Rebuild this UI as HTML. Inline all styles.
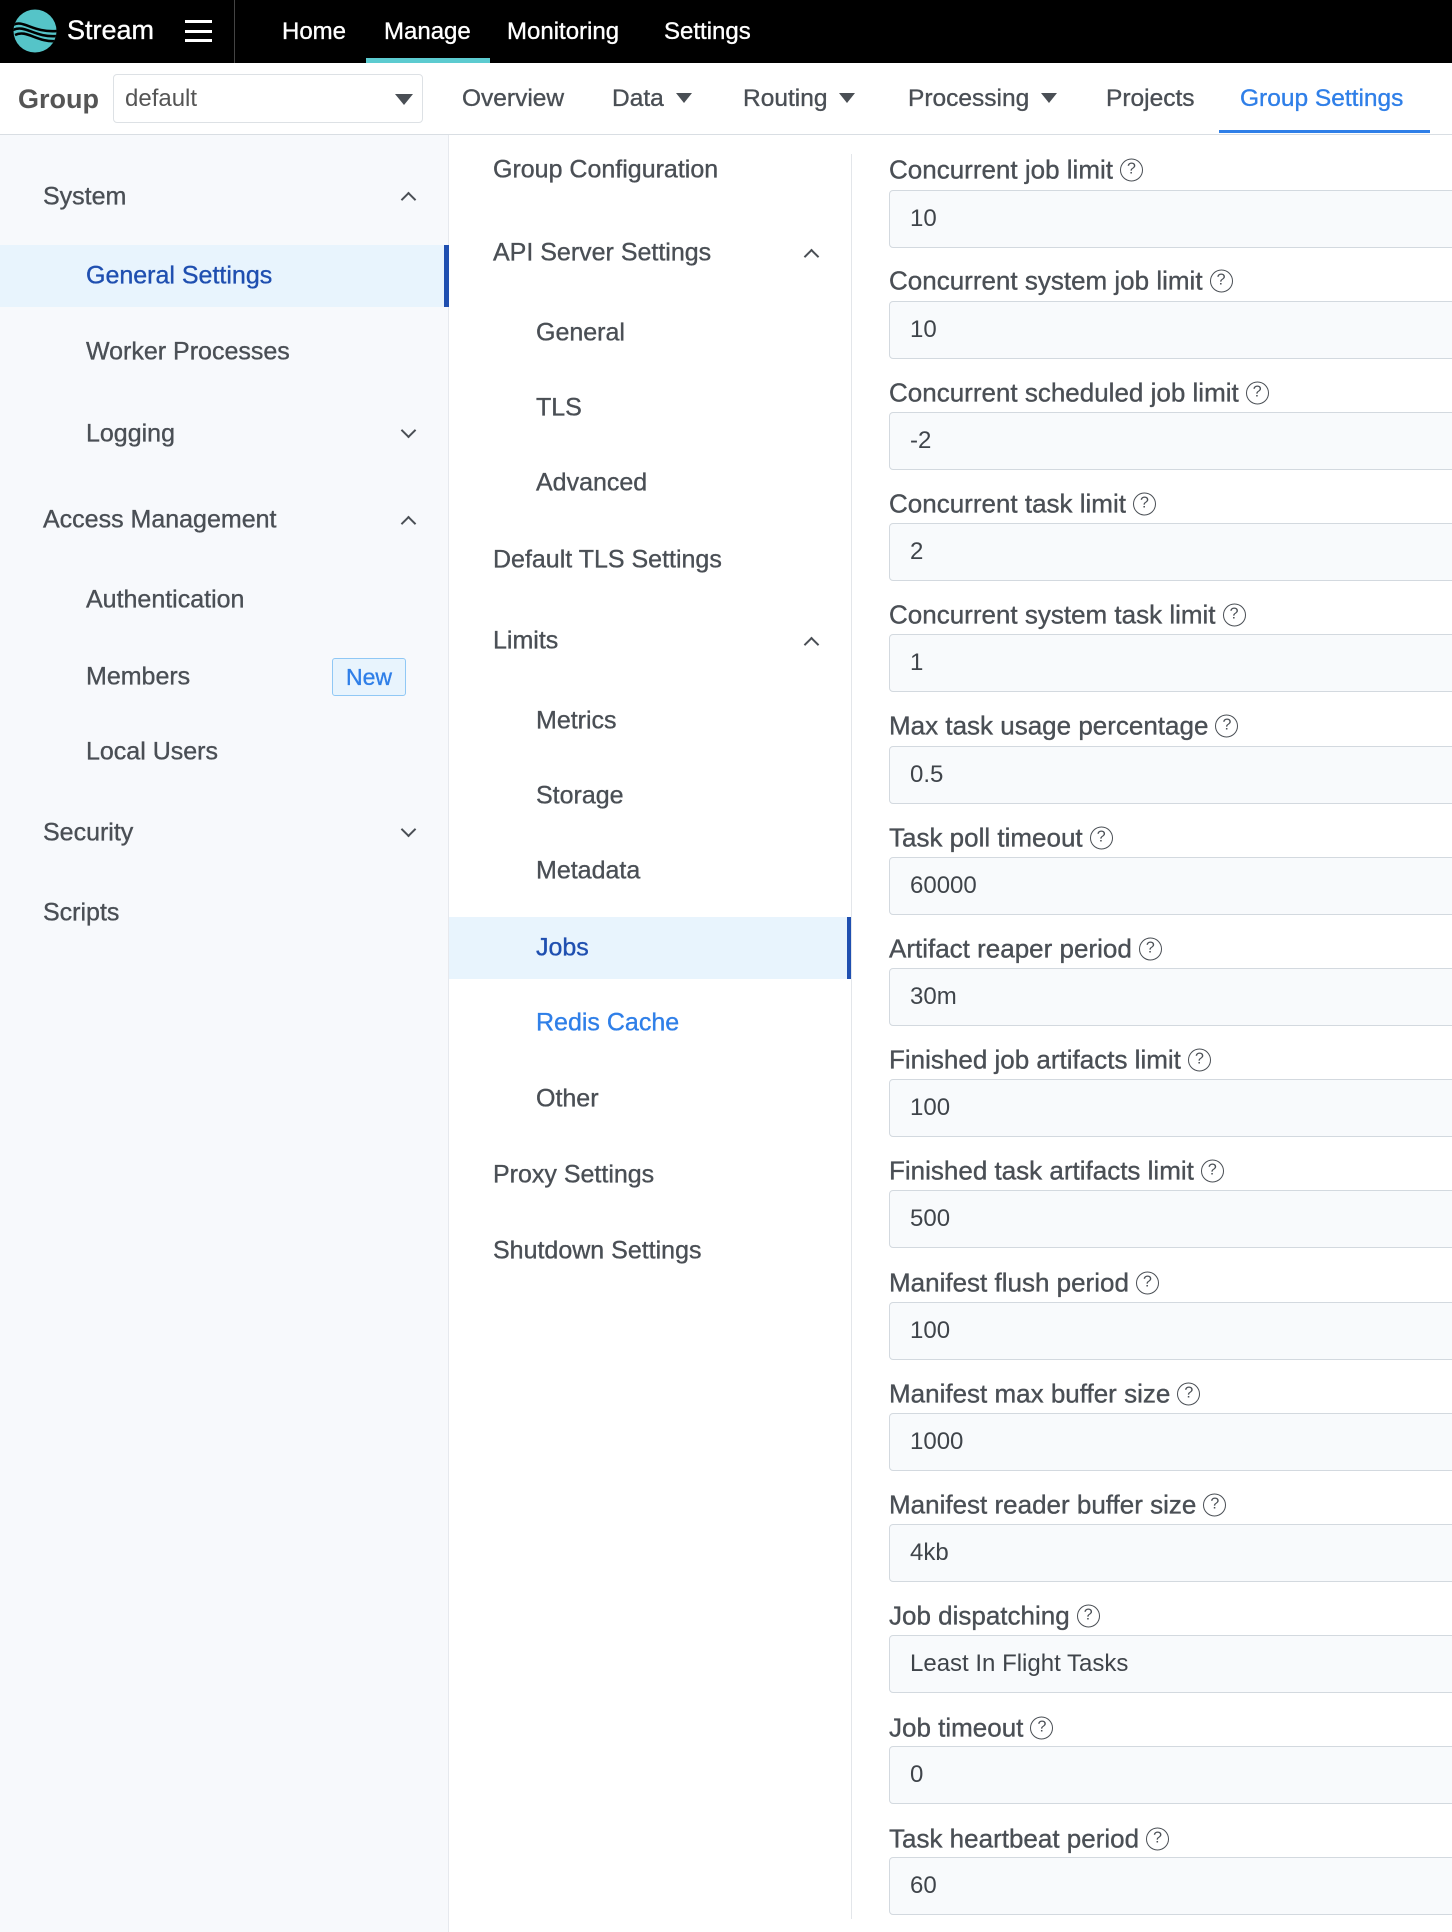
<!DOCTYPE html>
<html><head><meta charset="utf-8">
<style>
*{box-sizing:border-box;margin:0;padding:0}
body{width:1452px;height:1932px;overflow:hidden;background:#fff;font-family:"Liberation Sans",Arial,sans-serif;color:#4a4f55;position:relative;-webkit-text-stroke:0.35px currentColor}
.a{position:absolute;white-space:nowrap}
#top{position:absolute;left:0;top:0;width:1452px;height:63px;background:#000}
.tn{position:absolute;top:18px;color:#fff;font-size:24px}
#sub{position:absolute;left:0;top:63px;width:1452px;height:72px;background:#fff;border-bottom:1px solid #d9dee3}
.nv{position:absolute;top:22px;font-size:24.5px;color:#4a4f55}
.caret{display:inline-block;width:0;height:0;border-left:8px solid transparent;border-right:8px solid transparent;border-top:10px solid #4a4f55;margin-left:12px;vertical-align:middle;position:relative;top:-2px}
#left{position:absolute;left:0;top:135px;width:449px;height:1797px;background:#f7f9fc;border-right:1px solid #e6e9ee}
#mid{position:absolute;left:449px;top:135px;width:403px;height:1797px;background:#fff}
#midline{position:absolute;left:851px;top:154px;width:1px;height:1765px;background:#e3e6ea}
.it{position:absolute;font-size:25px;color:#4a4f55;transform:translateY(-50%)}
.chev{position:absolute;width:11px;height:11px;border-left:2px solid #4a4f55;border-top:2px solid #4a4f55;transform:rotate(45deg)}
.chev.d{transform:rotate(225deg)}
.lbl{position:absolute;left:889px;font-size:26px;color:#4a4f55;transform:translateY(-50%)}
.q{display:inline-block;width:23px;height:23px;border:1.8px solid #4a4f55;border-radius:50%;font-size:16px;text-align:center;line-height:20px;margin-left:7px;vertical-align:middle;position:relative;top:-2px;-webkit-text-stroke:0}
.inp{position:absolute;left:889px;width:580px;height:58px;background:#f8fafc;border:1px solid #d3d9df;border-radius:4px;font-size:24px;color:#3f444a;padding-left:20px;line-height:56px;-webkit-text-stroke:0}
</style></head><body>
<div id="top">
  <svg class="a" style="left:13px;top:9px" width="44" height="44" viewBox="0 0 44 44">
    <defs><clipPath id="c"><circle cx="22" cy="22" r="21.5"/></clipPath></defs>
    <circle cx="22" cy="22" r="21.5" fill="#55c4c8"/>
    <g clip-path="url(#c)" fill="none" stroke="#000" stroke-width="2.6">
      <path d="M0 16 C10 10 20 24 44 22"/>
      <path d="M0 21 C12 15 22 29 44 27"/>
      <path d="M2 26 C14 20 24 34 44 32"/>
    </g>
  </svg>
  <div class="a" style="left:67px;top:15px;color:#fff;font-size:27px">Stream</div>
  <div class="a" style="left:185px;top:20px;width:27px;height:3px;background:#fff"></div>
  <div class="a" style="left:185px;top:30px;width:27px;height:3px;background:#fff"></div>
  <div class="a" style="left:185px;top:39px;width:27px;height:3px;background:#fff"></div>
  <div class="a" style="left:234px;top:0;width:1px;height:63px;background:#444"></div>
  <div class="tn" style="left:282px">Home</div>
  <div class="tn" style="left:384px">Manage</div>
  <div class="tn" style="left:507px">Monitoring</div>
  <div class="tn" style="left:664px">Settings</div>
  <div class="a" style="left:366px;top:58px;width:124px;height:5px;background:#5ccbd0"></div>
</div>
<div id="sub">
  <div class="a" style="left:18px;top:21px;font-size:27px;color:#555;font-weight:bold;-webkit-text-stroke:0">Group</div>
  <div class="a" style="left:113px;top:11px;width:310px;height:49px;border:1px solid #dde1e5;border-radius:4px;background:#fff">
    <div class="a" style="left:11px;top:10px;font-size:24px;color:#555;-webkit-text-stroke:0">default</div>
    <div class="a" style="left:281px;top:19px;width:0;height:0;border-left:9px solid transparent;border-right:9px solid transparent;border-top:11px solid #4a4f55"></div>
  </div>
  <div class="nv" style="left:462px">Overview</div>
  <div class="nv" style="left:612px">Data<span class="caret"></span></div>
  <div class="nv" style="left:743px">Routing<span class="caret"></span></div>
  <div class="nv" style="left:908px">Processing<span class="caret"></span></div>
  <div class="nv" style="left:1106px">Projects</div>
  <div class="nv" style="left:1240px;color:#2f7fe8">Group Settings</div>
  <div class="a" style="left:1219px;top:67px;width:211px;height:3px;background:#2f7fe8"></div>
</div>
<div id="left">
  <div class="a" style="left:0;top:110px;width:449px;height:62px;background:#e8f4fd"></div>
  <div class="a" style="left:444px;top:110px;width:5px;height:62px;background:#1f4fb0"></div>
</div>
<div id="mid">
  <div class="a" style="left:0;top:782px;width:403px;height:62px;background:#e8f4fd"></div>
  <div class="a" style="left:398px;top:782px;width:5px;height:62px;background:#1f4fb0"></div>
</div>
<div id="midline"></div>

<div class="it" style="left:43px;top:197px">System</div><div class="chev" style="left:403px;top:194px"></div>
<div class="it" style="left:86px;top:276px;color:#1f4fb0">General Settings</div>
<div class="it" style="left:86px;top:352px">Worker Processes</div>
<div class="it" style="left:86px;top:434px">Logging</div><div class="chev d" style="left:403px;top:425px"></div>
<div class="it" style="left:43px;top:520px">Access Management</div><div class="chev" style="left:403px;top:518px"></div>
<div class="it" style="left:86px;top:600px">Authentication</div>
<div class="it" style="left:86px;top:677px">Members</div>
<div class="a" style="left:332px;top:658px;width:74px;height:38px;background:#e8f4fd;border:1px solid #90c8f5;border-radius:3px;color:#2f7fe8;font-size:23px;text-align:center;line-height:36px">New</div>
<div class="it" style="left:86px;top:752px">Local Users</div>
<div class="it" style="left:43px;top:833px">Security</div><div class="chev d" style="left:403px;top:824px"></div>
<div class="it" style="left:43px;top:913px">Scripts</div>

<div class="it" style="left:493px;top:170px">Group Configuration</div>
<div class="it" style="left:493px;top:253px">API Server Settings</div><div class="chev" style="left:806px;top:251px"></div>
<div class="it" style="left:536px;top:333px">General</div>
<div class="it" style="left:536px;top:408px">TLS</div>
<div class="it" style="left:536px;top:483px">Advanced</div>
<div class="it" style="left:493px;top:560px">Default TLS Settings</div>
<div class="it" style="left:493px;top:641px">Limits</div><div class="chev" style="left:806px;top:639px"></div>
<div class="it" style="left:536px;top:721px">Metrics</div>
<div class="it" style="left:536px;top:796px">Storage</div>
<div class="it" style="left:536px;top:871px">Metadata</div>
<div class="it" style="left:536px;top:948px;color:#1f4fb0">Jobs</div>
<div class="it" style="left:536px;top:1023px;color:#2f7fe8">Redis Cache</div>
<div class="it" style="left:536px;top:1099px">Other</div>
<div class="it" style="left:493px;top:1175px">Proxy Settings</div>
<div class="it" style="left:493px;top:1251px">Shutdown Settings</div>

<div class="lbl" style="top:170px">Concurrent job limit<span class="q">?</span></div><div class="inp" style="top:190px">10</div>
<div class="lbl" style="top:281px">Concurrent system job limit<span class="q">?</span></div><div class="inp" style="top:301px">10</div>
<div class="lbl" style="top:393px">Concurrent scheduled job limit<span class="q">?</span></div><div class="inp" style="top:412px">-2</div>
<div class="lbl" style="top:504px">Concurrent task limit<span class="q">?</span></div><div class="inp" style="top:523px">2</div>
<div class="lbl" style="top:615px">Concurrent system task limit<span class="q">?</span></div><div class="inp" style="top:634px">1</div>
<div class="lbl" style="top:726px">Max task usage percentage<span class="q">?</span></div><div class="inp" style="top:746px">0.5</div>
<div class="lbl" style="top:838px">Task poll timeout<span class="q">?</span></div><div class="inp" style="top:857px">60000</div>
<div class="lbl" style="top:949px">Artifact reaper period<span class="q">?</span></div><div class="inp" style="top:968px">30m</div>
<div class="lbl" style="top:1060px">Finished job artifacts limit<span class="q">?</span></div><div class="inp" style="top:1079px">100</div>
<div class="lbl" style="top:1171px">Finished task artifacts limit<span class="q">?</span></div><div class="inp" style="top:1190px">500</div>
<div class="lbl" style="top:1283px">Manifest flush period<span class="q">?</span></div><div class="inp" style="top:1302px">100</div>
<div class="lbl" style="top:1394px">Manifest max buffer size<span class="q">?</span></div><div class="inp" style="top:1413px">1000</div>
<div class="lbl" style="top:1505px">Manifest reader buffer size<span class="q">?</span></div><div class="inp" style="top:1524px">4kb</div>
<div class="lbl" style="top:1616px">Job dispatching<span class="q">?</span></div><div class="inp" style="top:1635px">Least In Flight Tasks</div>
<div class="lbl" style="top:1728px">Job timeout<span class="q">?</span></div><div class="inp" style="top:1746px">0</div>
<div class="lbl" style="top:1839px">Task heartbeat period<span class="q">?</span></div><div class="inp" style="top:1857px">60</div>
</body></html>
